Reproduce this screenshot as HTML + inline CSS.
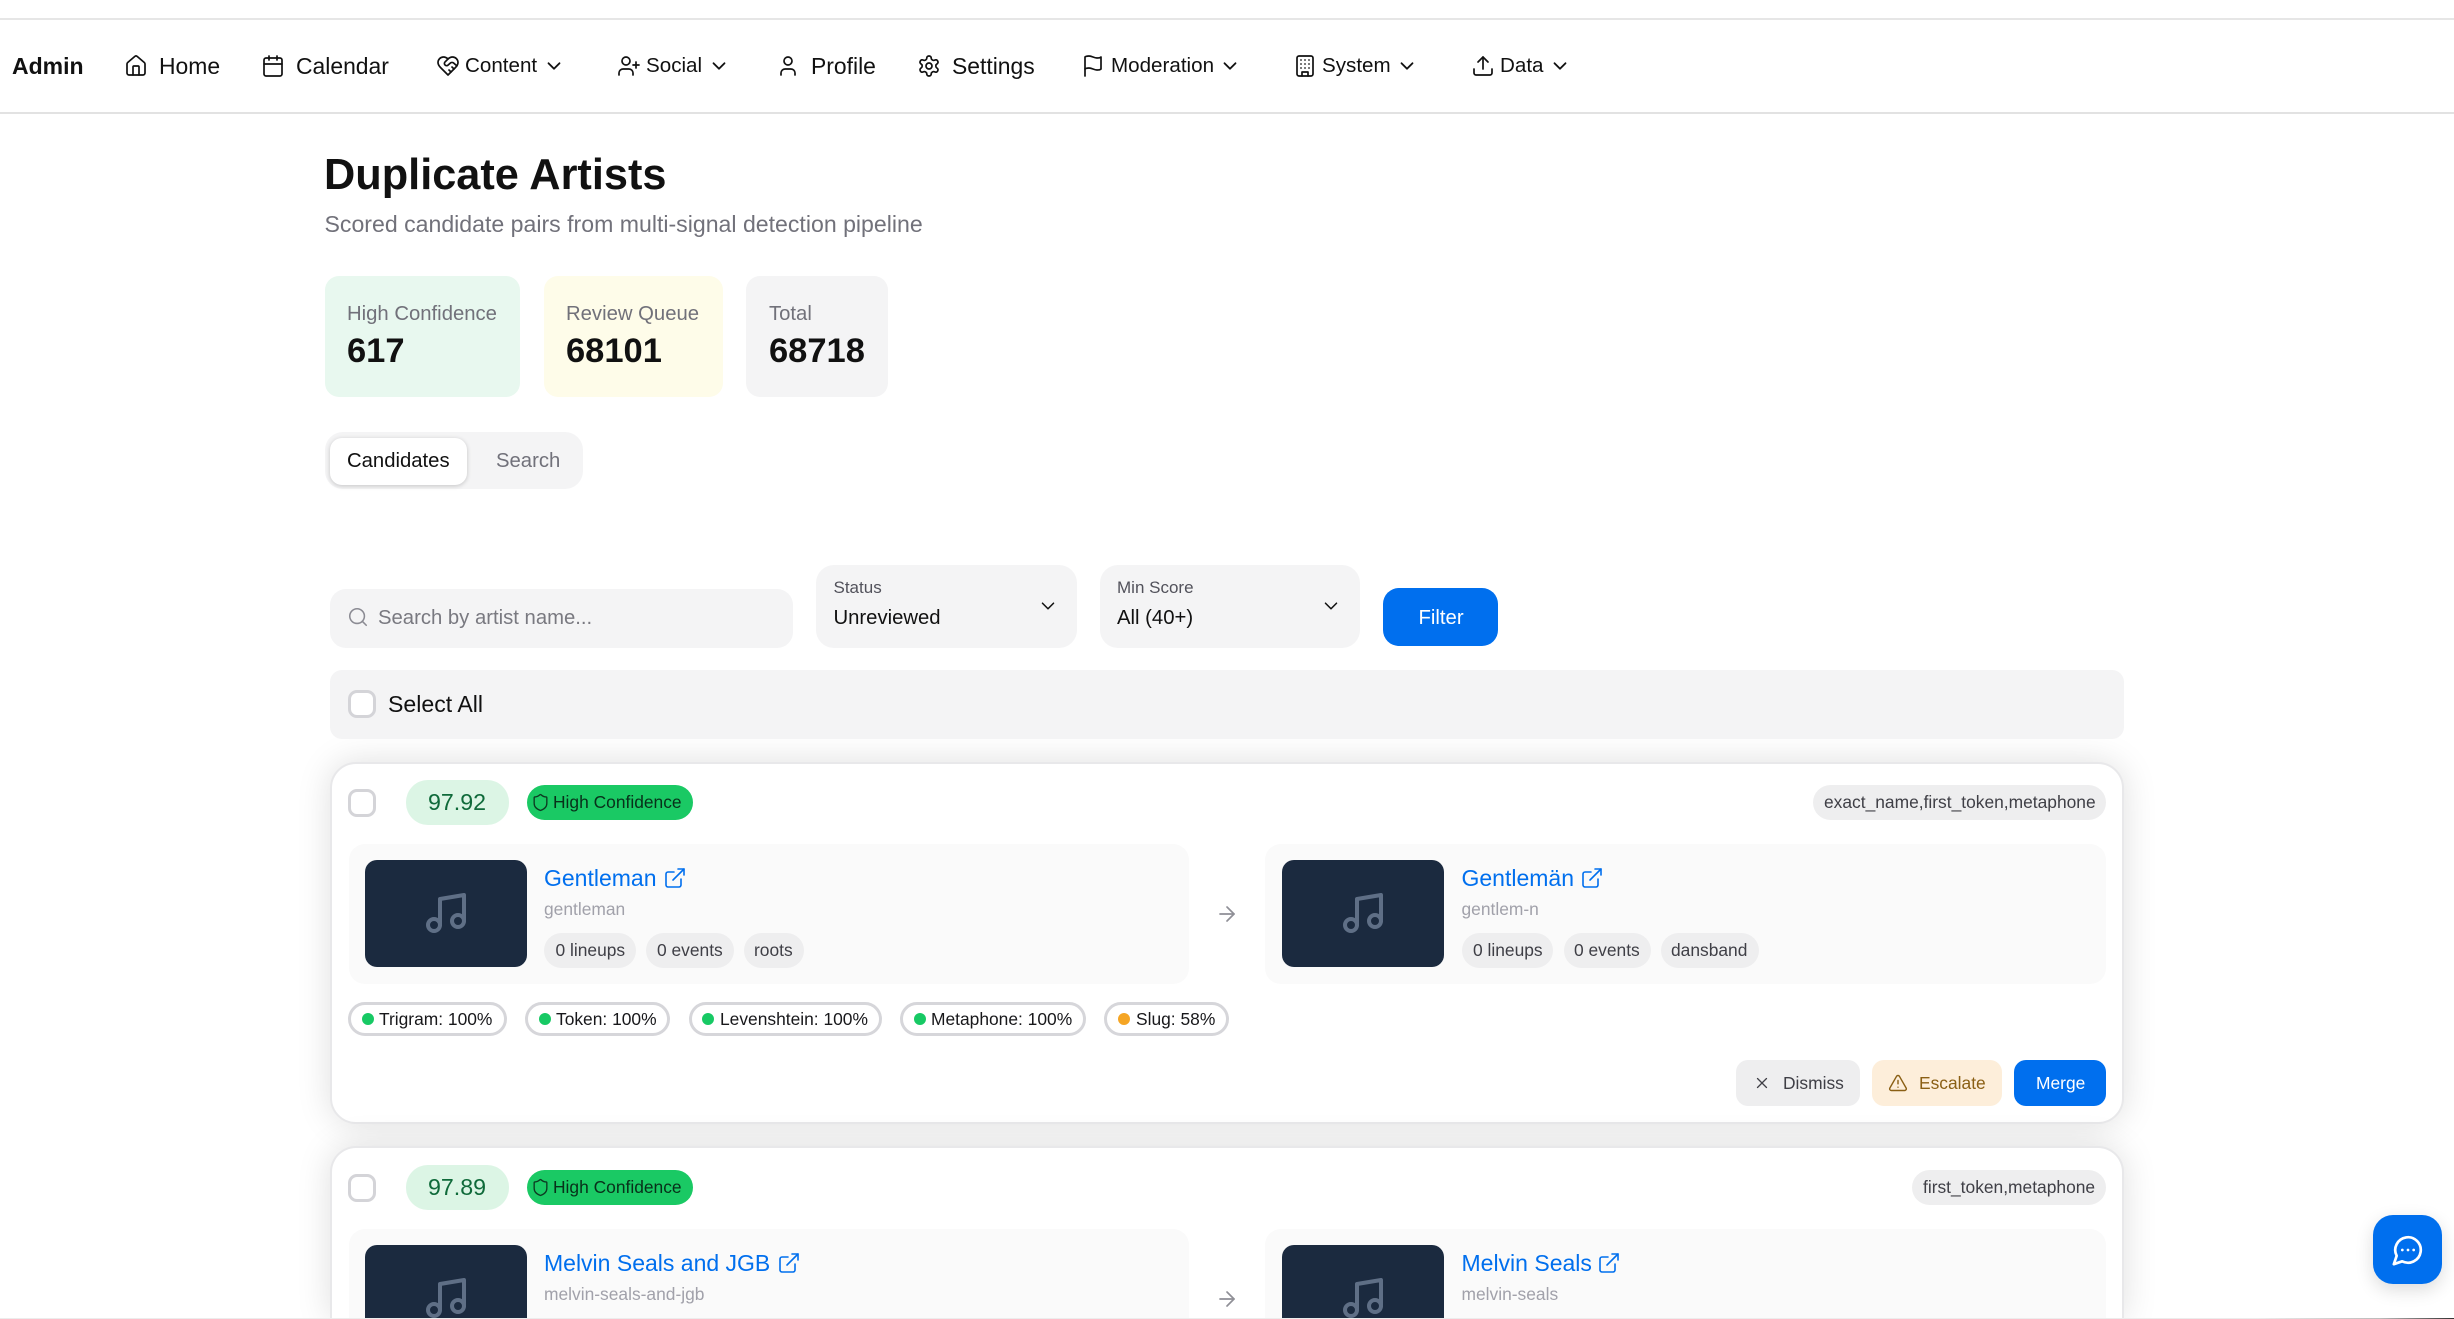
<!DOCTYPE html>
<html lang="en"><head><meta charset="utf-8"><title>Duplicate Artists</title>
<style>
html,body{margin:0;padding:0;background:#fff;width:2454px;height:1319px;overflow:hidden}
body{font-family:"Liberation Sans",Arial,sans-serif;color:#111}
#root{position:absolute;left:0;top:0;width:2454px;height:1319px;overflow:hidden;background:#fff}
.b{position:absolute;box-sizing:border-box}
.t{position:absolute;white-space:nowrap;line-height:0}
svg.i{position:absolute;fill:none;stroke:currentColor;stroke-width:1.7;stroke-linecap:round;stroke-linejoin:round;overflow:visible}
.nl{font-size:22.9px;top:66px}
.nd{font-size:20.6px;top:66px}
.card{left:330px;top:762px;width:1794px;height:362px;background:#fff;border:2px solid #e8e8ea;border-radius:26px;box-shadow:0 0 34px rgba(0,0,0,.13)}
.pill{background:#eeeeef;border-radius:18px;top:933px;height:35px}
.s{font-size:17.4px;color:#3f3f46}
.chip{top:1002px;height:34px;background:#fff;border:3px solid #d6d6da;border-radius:17px}
.dot{position:absolute;width:12px;height:12px;border-radius:50%;top:1013px;background:#17c964}
.cb{width:28px;height:28px;border:3px solid #d4d4d8;border-radius:9px;background:#fff}
</style></head><body><div id="root">
<svg width="0" height="0" style="position:absolute"><defs>
<symbol id="chev" viewBox="0 0 24 24"><path d="m6 9 6 6 6-6"/></symbol>
<symbol id="music" viewBox="0 0 24 24"><path d="M9 18V5l12-2v13"/><circle cx="6" cy="18" r="3"/><circle cx="18" cy="16" r="3"/></symbol>
<symbol id="ext" viewBox="0 0 24 24"><path d="M15 3h6v6"/><path d="M10 14 21 3"/><path d="M18 13v6a2 2 0 0 1-2 2H5a2 2 0 0 1-2-2V8a2 2 0 0 1 2-2h6"/></symbol>
<symbol id="shield" viewBox="0 0 24 24"><path d="M20 13c0 5-3.500 7.500-7.660 8.950a1 1 0 0 1-.67-.01C7.500 20.500 4 18 4 13V6a1 1 0 0 1 1-1c2 0 4.500-1.200 6.240-2.720a1.170 1.170 0 0 1 1.520 0C14.510 3.810 17 5 19 5a1 1 0 0 1 1 1z"/></symbol>
<symbol id="arrow" viewBox="0 0 24 24"><path d="M5 12h14"/><path d="m12 5 7 7-7 7"/></symbol>
</defs></svg>

<!-- top bar -->
<div class="b" style="left:0;top:18px;width:2454px;height:2px;background:#e6e6e6"></div>
<div class="b" style="left:0;top:112px;width:2454px;height:2px;background:#e2e2e2"></div>
<span class="t" style="left:12px;top:66px;font-size:23px;font-weight:700">Admin</span>

<svg class="i" style="left:124px;top:54px" width="24" height="24" viewBox="0 0 24 24"><path d="M15 21v-8a1 1 0 0 0-1-1h-4a1 1 0 0 0-1 1v8"/><path d="M3 10a2 2 0 0 1 .709-1.528l7-5.999a2 2 0 0 1 2.582 0l7 5.999A2 2 0 0 1 21 10v9a2 2 0 0 1-2 2H5a2 2 0 0 1-2-2z"/></svg>
<span class="t nl" style="left:159px">Home</span>
<svg class="i" style="left:261px;top:54px" width="24" height="24" viewBox="0 0 24 24"><path d="M8 2v4"/><path d="M16 2v4"/><rect x="3" y="4" width="18" height="18" rx="2"/><path d="M3 10h18"/></svg>
<span class="t nl" style="left:296px">Calendar</span>
<svg class="i" style="left:436px;top:54px" width="24" height="24" viewBox="0 0 24 24"><path d="M19 14c1.490-1.460 3-3.210 3-5.500A5.500 5.500 0 0 0 16.500 3c-1.760 0-3 .5-4.500 2-1.500-1.500-2.740-2-4.500-2A5.500 5.500 0 0 0 2 8.500c0 2.300 1.500 4.050 3 5.500l7 7Z"/><path d="M12 5 9.040 7.960a2.170 2.170 0 0 0 0 3.080c.82.82 2.130.85 3 .07l2.070-1.900a2.820 2.820 0 0 1 3.790 0l2.960 2.660"/><path d="m18 15-2-2"/><path d="m15 18-2-2"/></svg>
<span class="t nd" style="left:465px">Content</span>
<svg class="i" style="left:543px;top:55px;stroke-width:2" width="22" height="22"><use href="#chev"/></svg>
<svg class="i" style="left:617px;top:54px" width="24" height="24" viewBox="0 0 24 24"><path d="M16 21v-2a4 4 0 0 0-4-4H6a4 4 0 0 0-4 4v2"/><circle cx="9" cy="7" r="4"/><path d="M19 8v6"/><path d="M22 11h-6"/></svg>
<span class="t nd" style="left:646px">Social</span>
<svg class="i" style="left:708px;top:55px;stroke-width:2" width="22" height="22"><use href="#chev"/></svg>
<svg class="i" style="left:776px;top:54px" width="24" height="24" viewBox="0 0 24 24"><path d="M19 21v-2a4 4 0 0 0-4-4H9a4 4 0 0 0-4 4v2"/><circle cx="12" cy="7" r="4"/></svg>
<span class="t nl" style="left:811px">Profile</span>
<svg class="i" style="left:917px;top:54px" width="24" height="24" viewBox="0 0 24 24"><path d="M12.220 2h-.44a2 2 0 0 0-2 2v.18a2 2 0 0 1-1 1.730l-.43.25a2 2 0 0 1-2 0l-.15-.08a2 2 0 0 0-2.730.73l-.22.38a2 2 0 0 0 .73 2.730l.15.1a2 2 0 0 1 1 1.720v.51a2 2 0 0 1-1 1.740l-.15.09a2 2 0 0 0-.73 2.730l.22.38a2 2 0 0 0 2.730.73l.15-.08a2 2 0 0 1 2 0l.43.25a2 2 0 0 1 1 1.730V20a2 2 0 0 0 2 2h.44a2 2 0 0 0 2-2v-.18a2 2 0 0 1 1-1.730l.43-.25a2 2 0 0 1 2 0l.15.08a2 2 0 0 0 2.730-.73l.22-.39a2 2 0 0 0-.73-2.730l-.15-.08a2 2 0 0 1-1-1.740v-.5a2 2 0 0 1 1-1.740l.15-.09a2 2 0 0 0 .73-2.730l-.22-.38a2 2 0 0 0-2.730-.73l-.15.08a2 2 0 0 1-2 0l-.43-.25a2 2 0 0 1-1-1.730V4a2 2 0 0 0-2-2z"/><circle cx="12" cy="12" r="3"/></svg>
<span class="t nl" style="left:952px">Settings</span>
<svg class="i" style="left:1081px;top:54px" width="24" height="24" viewBox="0 0 24 24"><path d="M4 15s1-1 4-1 5 2 8 2 4-1 4-1V3s-1 1-4 1-5-2-8-2-4 1-4 1z"/><path d="M4 22v-7"/></svg>
<span class="t nd" style="left:1111px">Moderation</span>
<svg class="i" style="left:1219px;top:55px;stroke-width:2" width="22" height="22"><use href="#chev"/></svg>
<svg class="i" style="left:1293px;top:54px" width="24" height="24" viewBox="0 0 24 24"><rect x="4" y="2" width="16" height="20" rx="2"/><path d="M9 22v-4h6v4"/><path d="M8 6h.01M12 6h.01M16 6h.01M8 10h.01M12 10h.01M16 10h.01M8 14h.01M12 14h.01M16 14h.01"/></svg>
<span class="t nd" style="left:1322px">System</span>
<svg class="i" style="left:1396px;top:55px;stroke-width:2" width="22" height="22"><use href="#chev"/></svg>
<svg class="i" style="left:1471px;top:54px" width="24" height="24" viewBox="0 0 24 24"><path d="M21 15v4a2 2 0 0 1-2 2H5a2 2 0 0 1-2-2v-4"/><path d="m17 8-5-5-5 5"/><path d="M12 3v12"/></svg>
<span class="t nd" style="left:1500px">Data</span>
<svg class="i" style="left:1549px;top:55px;stroke-width:2" width="22" height="22"><use href="#chev"/></svg>

<!-- header -->
<span class="t" style="left:324px;top:175px;font-size:43.3px;font-weight:700">Duplicate Artists</span>
<span class="t" style="left:324.500px;top:224px;font-size:23.1px;color:#71717a">Scored candidate pairs from multi-signal detection pipeline</span>

<!-- stats -->
<div class="b" style="left:325px;top:276px;width:195px;height:121px;background:#e8f8ef;border-radius:14px"></div>
<div class="b" style="left:544px;top:276px;width:179px;height:121px;background:#fefce9;border-radius:14px"></div>
<div class="b" style="left:746px;top:276px;width:142px;height:121px;background:#f4f4f5;border-radius:14px"></div>
<span class="t" style="left:347px;top:313.500px;font-size:20.3px;color:#71717a">High Confidence</span>
<span class="t" style="left:566px;top:313.500px;font-size:20.3px;color:#71717a">Review Queue</span>
<span class="t" style="left:769px;top:313.500px;font-size:20.3px;color:#71717a">Total</span>
<span class="t" style="left:347px;top:351px;font-size:34.5px;font-weight:700">617</span>
<span class="t" style="left:566px;top:351px;font-size:34.5px;font-weight:700">68101</span>
<span class="t" style="left:769px;top:351px;font-size:34.5px;font-weight:700">68718</span>

<!-- tabs -->
<div class="b" style="left:325px;top:432px;width:258px;height:57px;background:#f4f4f5;border-radius:18px"></div>
<div class="b" style="left:330px;top:438px;width:137px;height:47px;background:#fff;border-radius:12px;box-shadow:0 1px 5px rgba(0,0,0,.2)"></div>
<span class="t" style="left:347px;top:461px;font-size:20.3px">Candidates</span>
<span class="t" style="left:496px;top:461px;font-size:20.3px;color:#71717a">Search</span>

<!-- filters -->
<div class="b" style="left:330px;top:589px;width:463px;height:59px;background:#f4f4f5;border-radius:16px"></div>
<svg class="i" style="left:347px;top:606px;color:#8b8b93" width="22" height="22" viewBox="0 0 24 24"><path d="m21 21-4.300-4.300"/><circle cx="11" cy="11" r="8"/></svg>
<span class="t" style="left:378px;top:617.500px;font-size:20.3px;color:#797980">Search by artist name...</span>
<div class="b" style="left:816px;top:565px;width:261px;height:83px;background:#f4f4f5;border-radius:18px"></div>
<span class="t" style="left:833.500px;top:588px;font-size:17px;color:#52525b">Status</span>
<span class="t" style="left:833.500px;top:617.500px;font-size:20.3px">Unreviewed</span>
<svg class="i" style="left:1037px;top:595px;stroke-width:1.7" width="22" height="22"><use href="#chev"/></svg>
<div class="b" style="left:1100px;top:565px;width:260px;height:83px;background:#f4f4f5;border-radius:18px"></div>
<span class="t" style="left:1117px;top:588px;font-size:17px;color:#52525b">Min Score</span>
<span class="t" style="left:1117px;top:617.500px;font-size:20.3px">All (40+)</span>
<svg class="i" style="left:1320px;top:595px;stroke-width:1.7" width="22" height="22"><use href="#chev"/></svg>
<div class="b" style="left:1383px;top:588px;width:115px;height:58px;background:#006fee;border-radius:16px"></div>
<span class="t" style="left:1418.500px;top:617.500px;font-size:20.3px;color:#fff">Filter</span>

<!-- card 1 -->
<div class="b card"></div>
<!-- select all -->
<div class="b" style="left:330px;top:670px;width:1794px;height:69px;background:#f4f4f5;border-radius:12px"></div>
<div class="b cb" style="left:348px;top:690px"></div>
<span class="t" style="left:388px;top:704px;font-size:23.1px">Select All</span>

<div class="b cb" style="left:348px;top:789px"></div>
<div class="b" style="left:406px;top:780px;width:103px;height:45px;background:#dcf5e5;border-radius:22px"></div>
<span class="t" style="left:428px;top:802px;font-size:23.200px;color:#0f6a3a">97.92</span>
<div class="b" style="left:527px;top:785px;width:166px;height:35px;background:#1ac964;border-radius:18px"></div>
<svg class="i" style="left:531px;top:793px;color:#0d3b22" width="19" height="19"><use href="#shield"/></svg>
<span class="t" style="left:553px;top:802px;font-size:17.4px;color:#08301a">High Confidence</span>
<div class="b pill" style="left:1813px;top:785px;width:293px"></div>
<span class="t s" style="left:1824px;top:802px">exact_name,first_token,metaphone</span>

<div class="b" style="left:349px;top:844px;width:840px;height:140px;background:#fafafa;border-radius:16px"></div>
<div class="b" style="left:365px;top:860px;width:162px;height:107px;background:#1b2a3f;border-radius:12px"></div>
<svg class="i" style="left:422px;top:889px;color:#5f6f86;stroke-width:2" width="48" height="48"><use href="#music"/></svg>
<span class="t" style="left:544px;top:878px;font-size:23px;color:#006fee">Gentleman</span>
<svg class="i" style="left:663px;top:866px;color:#006fee;stroke-width:1.6" width="24" height="24"><use href="#ext"/></svg>
<span class="t" style="left:544px;top:909px;font-size:17.4px;color:#a1a1aa">gentleman</span>
<div class="b pill" style="left:544px;width:92px"></div><span class="t s" style="left:555.500px;top:950px">0 lineups</span>
<div class="b pill" style="left:646px;width:88px"></div><span class="t s" style="left:657px;top:950px">0 events</span>
<div class="b pill" style="left:744px;width:60px"></div><span class="t s" style="left:754px;top:950px">roots</span>

<svg class="i" style="left:1215px;top:902px;color:#8f8f96" width="24" height="24"><use href="#arrow"/></svg>

<div class="b" style="left:1265px;top:844px;width:841px;height:140px;background:#fafafa;border-radius:16px"></div>
<div class="b" style="left:1282px;top:860px;width:162px;height:107px;background:#1b2a3f;border-radius:12px"></div>
<svg class="i" style="left:1339px;top:889px;color:#5f6f86;stroke-width:2" width="48" height="48"><use href="#music"/></svg>
<span class="t" style="left:1461.500px;top:878px;font-size:23px;color:#006fee">Gentlemän</span>
<svg class="i" style="left:1580px;top:866px;color:#006fee;stroke-width:1.6" width="24" height="24"><use href="#ext"/></svg>
<span class="t" style="left:1461.500px;top:909px;font-size:17.4px;color:#a1a1aa">gentlem-n</span>
<div class="b pill" style="left:1462px;width:91px"></div><span class="t s" style="left:1473px;top:950px">0 lineups</span>
<div class="b pill" style="left:1564px;width:87px"></div><span class="t s" style="left:1574px;top:950px">0 events</span>
<div class="b pill" style="left:1661px;width:98px"></div><span class="t s" style="left:1671px;top:950px">dansband</span>

<div class="b chip" style="left:348px;width:159px"></div><i class="dot" style="left:362px"></i><span class="t s" style="left:379px;top:1019px;color:#18181b">Trigram: 100%</span>
<div class="b chip" style="left:525px;width:145px"></div><i class="dot" style="left:539px"></i><span class="t s" style="left:556px;top:1019px;color:#18181b">Token: 100%</span>
<div class="b chip" style="left:689px;width:193px"></div><i class="dot" style="left:702px"></i><span class="t s" style="left:720px;top:1019px;color:#18181b">Levenshtein: 100%</span>
<div class="b chip" style="left:900px;width:186px"></div><i class="dot" style="left:914px"></i><span class="t s" style="left:931px;top:1019px;color:#18181b">Metaphone: 100%</span>
<div class="b chip" style="left:1104px;width:125px"></div><i class="dot" style="left:1118px;background:#f5a524"></i><span class="t s" style="left:1136px;top:1019px;color:#18181b">Slug: 58%</span>

<div class="b" style="left:1736px;top:1060px;width:124px;height:46px;background:#eeeeef;border-radius:12px"></div>
<svg class="i" style="left:1753px;top:1074px;color:#3f3f46" width="18" height="18" viewBox="0 0 24 24"><path d="M18 6 6 18"/><path d="m6 6 12 12"/></svg>
<span class="t s" style="left:1783px;top:1083px">Dismiss</span>
<div class="b" style="left:1872px;top:1060px;width:130px;height:46px;background:#fdeeda;border-radius:12px"></div>
<svg class="i" style="left:1888px;top:1073px;color:#8a5f14" width="20" height="20" viewBox="0 0 24 24"><path d="m21.730 18-8-14a2 2 0 0 0-3.480 0l-8 14A2 2 0 0 0 4 21h16a2 2 0 0 0 1.730-3"/><path d="M12 9v4"/><path d="M12 17h.01"/></svg>
<span class="t s" style="left:1919px;top:1083px;color:#8a5f14">Escalate</span>
<div class="b" style="left:2014px;top:1060px;width:92px;height:46px;background:#006fee;border-radius:12px"></div>
<span class="t s" style="left:2036px;top:1083px;color:#fff">Merge</span>

<!-- card 2 -->
<div class="b card" style="top:1146px;height:173px;border-bottom:0;border-radius:26px 26px 0 0"></div>
<div class="b cb" style="left:348px;top:1174px"></div>
<div class="b" style="left:406px;top:1165px;width:103px;height:45px;background:#dcf5e5;border-radius:22px"></div>
<span class="t" style="left:428px;top:1187px;font-size:23.200px;color:#0f6a3a">97.89</span>
<div class="b" style="left:527px;top:1170px;width:166px;height:35px;background:#1ac964;border-radius:18px"></div>
<svg class="i" style="left:531px;top:1178px;color:#0d3b22" width="19" height="19"><use href="#shield"/></svg>
<span class="t" style="left:553px;top:1187px;font-size:17.4px;color:#08301a">High Confidence</span>
<div class="b pill" style="left:1912px;top:1170px;width:194px"></div>
<span class="t s" style="left:1923px;top:1187px">first_token,metaphone</span>

<div class="b" style="left:349px;top:1229px;width:840px;height:90px;background:#fafafa;border-radius:16px 16px 0 0"></div>
<div class="b" style="left:365px;top:1245px;width:162px;height:74px;background:#1b2a3f;border-radius:12px 12px 0 0"></div>
<div class="b" style="left:420px;top:1272px;width:52px;height:47px;overflow:hidden"><svg class="i" style="left:2px;top:2px;color:#5f6f86;stroke-width:2" width="48" height="48"><use href="#music"/></svg></div>
<span class="t" style="left:544px;top:1263px;font-size:23px;color:#006fee">Melvin Seals and JGB</span>
<svg class="i" style="left:777px;top:1251px;color:#006fee;stroke-width:1.6" width="24" height="24"><use href="#ext"/></svg>
<span class="t" style="left:544px;top:1294px;font-size:17.4px;color:#a1a1aa">melvin-seals-and-jgb</span>

<svg class="i" style="left:1215px;top:1287px;color:#8f8f96" width="24" height="24"><use href="#arrow"/></svg>

<div class="b" style="left:1265px;top:1229px;width:841px;height:90px;background:#fafafa;border-radius:16px 16px 0 0"></div>
<div class="b" style="left:1282px;top:1245px;width:162px;height:74px;background:#1b2a3f;border-radius:12px 12px 0 0"></div>
<div class="b" style="left:1337px;top:1272px;width:52px;height:47px;overflow:hidden"><svg class="i" style="left:2px;top:2px;color:#5f6f86;stroke-width:2" width="48" height="48"><use href="#music"/></svg></div>
<span class="t" style="left:1461.500px;top:1263px;font-size:23px;color:#006fee">Melvin Seals</span>
<svg class="i" style="left:1597px;top:1251px;color:#006fee;stroke-width:1.6" width="24" height="24"><use href="#ext"/></svg>
<span class="t" style="left:1461.500px;top:1294px;font-size:17.4px;color:#a1a1aa">melvin-seals</span>

<!-- fab -->
<div class="b" style="left:2373px;top:1215px;width:69px;height:69px;background:#006fee;border-radius:20px;box-shadow:0 6px 18px rgba(0,0,0,.14)"></div>
<svg class="i" style="left:2391px;top:1233px;color:#fff;stroke-width:1.9" width="34" height="34" viewBox="0 0 24 24"><path d="M7.900 20A9 9 0 1 0 4 16.100L2 22Z"/><path d="M8 12h.01"/><path d="M12 12h.01"/><path d="M16 12h.01"/></svg>

<div class="b" style="left:0;top:1318px;width:2454px;height:1px;background:linear-gradient(90deg,#ececec 0,#ececec 92%,#bbb 97%,#333 100%)"></div>
</div></body></html>
